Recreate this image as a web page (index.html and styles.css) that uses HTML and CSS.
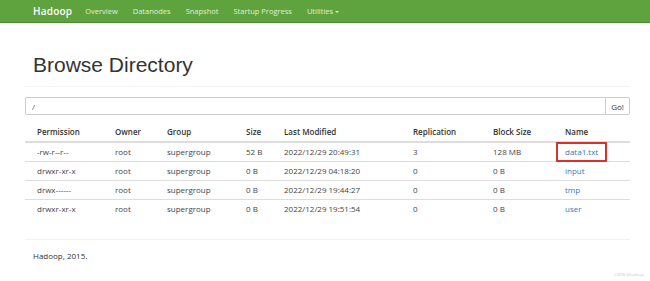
FILE: index.html
```html
<!DOCTYPE html>
<html lang="en">
<head>
    <meta charset="UTF-8">
    <meta name="viewport" content="width=device-width, initial-scale=1.0">
    <title>Browsing HDFS</title>
    <link rel="stylesheet" href="styles.css">
</head>
<body>
    <header class="navbar">
        <span class="brand">Hadoop</span>
        <a href="#">Overview</a>
        <a href="#">Datanodes</a>
        <a href="#">Snapshot</a>
        <a href="#">Startup Progress</a>
        <a href="#">Utilities <span class="caret"></span></a>
    </header>

    <div class="container">
        <div class="page-header">
            <h1>Browse Directory</h1>
        </div>

        <!-- Path bar -->
        <div class="path-bar">
            <input type="text" value="/">
            <button type="button">Go!</button>
        </div>

        <table class="listing">
            <thead>
                <tr>
                    <th class="c-perm">Permission</th>
                    <th class="c-owner">Owner</th>
                    <th class="c-group">Group</th>
                    <th class="c-size">Size</th>
                    <th class="c-mod">Last Modified</th>
                    <th class="c-rep">Replication</th>
                    <th class="c-block">Block Size</th>
                    <th>Name</th>
                </tr>
            </thead>
            <tbody>
                <tr>
                    <td>-rw-r--r--</td><td>root</td><td>supergroup</td><td>52 B</td>
                    <td>2022/12/29 20:49:31</td><td>3</td><td>128 MB</td>
                    <td><a href="#" class="marked">data1.txt</a></td>
                </tr>
                <tr>
                    <td>drwxr-xr-x</td><td>root</td><td>supergroup</td><td>0 B</td>
                    <td>2022/12/29 04:18:20</td><td>0</td><td>0 B</td>
                    <td><a href="#">input</a></td>
                </tr>
                <tr>
                    <td>drwx------</td><td>root</td><td>supergroup</td><td>0 B</td>
                    <td>2022/12/29 19:44:27</td><td>0</td><td>0 B</td>
                    <td><a href="#">tmp</a></td>
                </tr>
                <tr>
                    <td>drwxr-xr-x</td><td>root</td><td>supergroup</td><td>0 B</td>
                    <td>2022/12/29 19:51:54</td><td>0</td><td>0 B</td>
                    <td><a href="#">user</a></td>
                </tr>
            </tbody>
        </table>

        <footer class="footer">
            <p>Hadoop, 2015.</p>
        </footer>
    </div>

    <div class="watermark">CSDN @hadoop</div>
</body>
</html>
```

FILE: styles.css
```css
* {
    margin: 0;
    padding: 0;
    box-sizing: border-box;
}

body {
    font-family: "Open Sans", "Noto Sans", sans-serif;
    font-size: 8px;
    color: #333;
    background: #fff;
}

.navbar {
    height: 23px;
    background-color: #5fa33e;
    border-bottom: 1px solid #4e8a33;
    display: flex;
    align-items: center;
    padding-left: 33px;
    gap: 15px;
}

.navbar .brand {
    color: #fff;
    font-size: 10px;
    font-weight: 600;
    margin-right: -2px;
    letter-spacing: 0.2px;
}

.navbar a {
    color: #e1eed8;
    text-decoration: none;
    font-size: 7.5px;
}

.caret {
    display: inline-block;
    width: 0;
    height: 0;
    border-top: 2px solid #e1eed8;
    border-left: 2px solid transparent;
    border-right: 2px solid transparent;
    vertical-align: middle;
}

.container {
    padding: 0 20px 0 25px;
}

.page-header {
    padding: 30px 0 9px 8px;
    border-bottom: 1px solid #f2f2f2;
    margin-bottom: 10px;
}

h1 {
    font-family: "Liberation Sans", Arial, sans-serif;
    font-weight: normal;
    font-size: 21px;
    line-height: 24px;
    color: #333;
}

.path-bar {
    display: flex;
    height: 18px;
}

.path-bar input {
    flex: 1;
    border: 1px solid #ccc;
    border-radius: 2px 0 0 2px;
    padding: 0 6px;
    font-family: inherit;
    font-size: 8px;
    color: #555;
}

.path-bar button {
    width: 24px;
    border: 1px solid #ccc;
    border-left: none;
    border-radius: 0 2px 2px 0;
    background: #fff;
    font-family: inherit;
    font-size: 8px;
    color: #333;
}

.listing {
    width: 100%;
    border-collapse: collapse;
    margin-top: 6px;
}

.listing th {
    text-align: left;
    font-weight: 600;
    height: 21px;
    padding: 0 0 0 12px;
    border-bottom: 2px solid #ddd;
}

.listing td {
    padding: 0 0 0 12px;
    height: 19px;
    line-height: 12px;
    border-top: 1px solid #ddd;
    color: #444;
}

.c-perm { width: 78px; }
.c-owner { width: 52px; }
.c-group { width: 79px; }
.c-size { width: 38px; }
.c-mod { width: 129px; }
.c-rep { width: 80px; }
.c-block { width: 72px; }

.listing a {
    color: #337ab7;
    text-decoration: none;
}

.listing a.marked {
    display: inline-block;
    margin: -4px 0 -4px -9px;
    padding: 2px 7px 2px;
    border: 2px solid #d9312e;
}

.footer {
    margin-top: 21px;
    border-top: 1px solid #f2f2f2;
    padding: 10px 8px;
}

.watermark {
    position: absolute;
    right: 6px;
    bottom: 4px;
    font-size: 4px;
    color: #c8c8c8;
}
```
